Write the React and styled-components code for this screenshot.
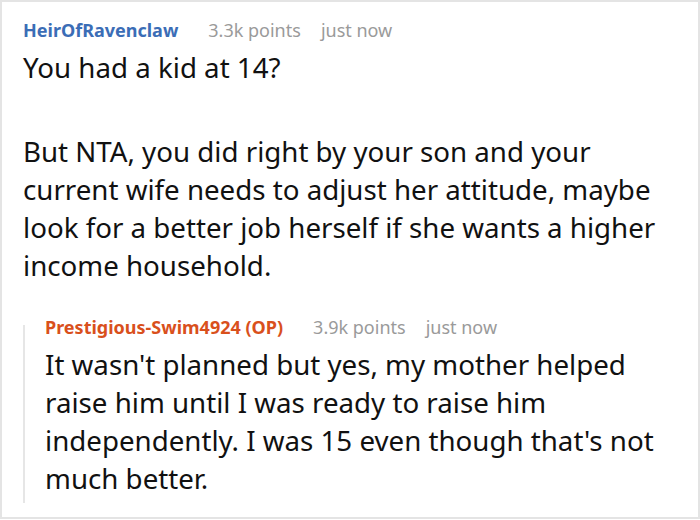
import React from "react";
import styled, { createGlobalStyle } from "styled-components";

const GlobalStyle = createGlobalStyle`
  html, body {
    margin: 0;
    padding: 0;
    background: #fff;
  }
  body {
    font-family: "Noto Sans", "Open Sans", sans-serif;
  }
`;

const Card = styled.div`
  width: 700px;
  height: 519px;
  box-sizing: border-box;
  border: 2px solid #e4e4e4;
  padding: 13px 8px 0 21px;
  overflow: hidden;
`;

const Meta = styled.div`
  display: flex;
  align-items: baseline;
  font-size: 18px;
  line-height: 30px;
`;

const Author = styled.span`
  font-weight: 700;
  color: ${(props) => (props.$op ? "#d9501c" : "#3b6db6")};
  margin-right: 30px;
`;

const Info = styled.span`
  color: #9a9a9a;
  margin-right: 20px;
`;

const Body = styled.div`
  font-size: 27.7px;
  line-height: 38px;
  color: #111;
  margin-top: 3px;
`;

const Para = styled.p`
  margin: 0 0 46px;
  &:last-child {
    margin-bottom: 0;
  }
`;

const Reply = styled.div`
  position: relative;
  margin-top: 28px;
  padding: 0 0 6px 22px;

  &::before {
    content: "";
    position: absolute;
    left: 0;
    top: 13px;
    bottom: 0;
    width: 2px;
    background: #e6e6e6;
  }
`;

const Comment = ({ author, op, points, time, children }) => (
  <>
    <Meta>
      <Author $op={op}>{author}</Author>
      <Info>{points}</Info>
      <Info>{time}</Info>
    </Meta>
    <Body>{children}</Body>
  </>
);

export default function App() {
  return (
    <>
      <GlobalStyle />
      <Card>
        <Comment author="HeirOfRavenclaw" points="3.3k points" time="just now">
          <Para>You had a kid at 14?</Para>
          <Para>
            But NTA, you did right by your son and your current wife needs to
            adjust her attitude, maybe look for a better job herself if she
            wants a higher income household.
          </Para>
        </Comment>
        <Reply>
          <Comment
            author="Prestigious-Swim4924 (OP)"
            op
            points="3.9k points"
            time="just now"
          >
            <Para>
              It wasn't planned but yes, my mother helped raise him until I was
              ready to raise him independently. I was 15 even though that's not
              much better.
            </Para>
          </Comment>
        </Reply>
      </Card>
    </>
  );
}
